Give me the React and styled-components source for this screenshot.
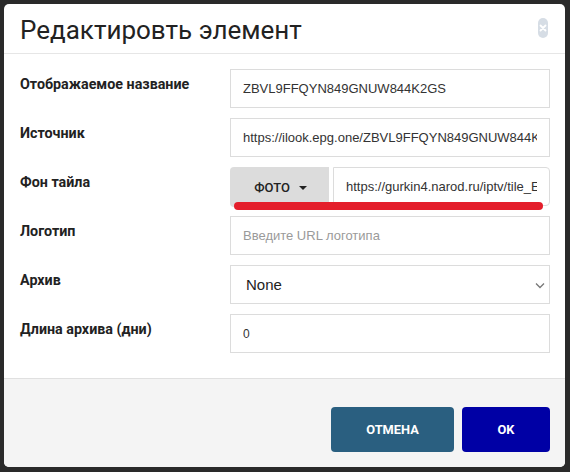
import styled, { createGlobalStyle } from 'styled-components';

const GlobalStyle = createGlobalStyle`
    html, body {
        margin: 0;
        padding: 0;
        background: #2a2a2a;
    }
    * {
        box-sizing: border-box;
    }
`;

const Dialog = styled.div`
    margin: 4px 5px 0 4px;
    width: 561px;
    height: 463px;
    background: #ffffff;
    border-radius: 5px;
    overflow: hidden;
    display: flex;
    flex-direction: column;
    font-family: Roboto, "Liberation Sans", sans-serif;
`;

const Header = styled.div`
    height: 50px;
    padding: 2px 16px 0 16px;
    display: flex;
    align-items: center;
    justify-content: space-between;
    border-bottom: 1px solid #e6e6e6;
`;

const Title = styled.h2`
    margin: 0;
    font-size: 26px;
    font-weight: 400;
    color: #222;
`;

const CloseButton = styled.button`
    border: none;
    background: transparent;
    padding: 0;
    margin-right: 1px;
    margin-top: -4px;
    display: flex;
    cursor: pointer;
`;

const Body = styled.div`
    flex: 1;
    padding: 15px 15px 24px 16px;
    display: flex;
    flex-direction: column;
    gap: 10px;
`;

const Row = styled.div`
    display: grid;
    grid-template-columns: 210px 320px;
    height: 39px;
`;

const Label = styled.label`
    padding-top: 5px;
    font-size: 14.3px;
    line-height: 20px;
    font-weight: 700;
    color: #222;
`;

const TextInput = styled.input`
    width: 100%;
    height: 39px;
    border: 1px solid #dcdcdc;
    border-radius: ${(p) => (p.$joined ? '0 4px 4px 0' : '0')};
    padding: 0 12px;
    font-family: "Liberation Sans", Arial, sans-serif;
    font-size: ${(p) => p.$size || 13}px;
    color: #333;
    background: #fff;
    outline: none;

    &::placeholder {
        color: #9a9a9a;
    }
`;

const SelectWrap = styled.div`
    position: relative;
    height: 39px;
`;

const Select = styled.select`
    width: 100%;
    height: 39px;
    border: 1px solid #dcdcdc;
    background: #fff;
    padding: 0 30px 0 15px;
    font-family: "Liberation Sans", Arial, sans-serif;
    font-size: 15px;
    color: #222;
    appearance: none;
    outline: none;
`;

const Chevron = styled.svg`
    position: absolute;
    right: 5px;
    top: 17px;
    pointer-events: none;
`;

const Group = styled.div`
    position: relative;
    display: flex;
    gap: 4px;
    height: 40px;
`;

const TypeButton = styled.button`
    flex: 0 0 99px;
    border: none;
    border-radius: 4px 0 0 4px;
    background: #dcdcdc;
    font-family: Roboto, "Liberation Sans", sans-serif;
    font-size: 13px;
    font-weight: 500;
    color: #222;
    display: flex;
    align-items: center;
    justify-content: center;
    gap: 9px;
    padding: 0 0 0 2px;
`;

const Caret = styled.span`
    width: 0;
    height: 0;
    border-left: 4px solid transparent;
    border-right: 4px solid transparent;
    border-top: 4px solid #222;
    margin-top: 1px;
`;

const Underline = styled.span`
    position: absolute;
    left: 4px;
    top: 35px;
    width: 309px;
    height: 8px;
    border-radius: 4px;
    background: #e41e2b;
    pointer-events: none;
`;

const Footer = styled.div`
    height: 89px;
    border-top: 1px solid #e0e0e0;
    background: #f4f4f4;
    padding: 28px 15px 15px 15px;
    display: flex;
    justify-content: flex-end;
    gap: 8px;
`;

const ActionButton = styled.button`
    width: ${(p) => p.$width}px;
    height: 45px;
    border: none;
    border-radius: 4px;
    background: ${(p) => p.$bg};
    color: #fff;
    font-family: Roboto, "Liberation Sans", sans-serif;
    font-size: 12.8px;
    font-weight: 700;
    text-transform: uppercase;
    cursor: pointer;
`;

export default function App() {
    return (
        <>
            <GlobalStyle />
            <Dialog>
                <Header>
                    <Title>Редактировть элемент</Title>
                    <CloseButton aria-label="close">
                        <svg width="10" height="20" viewBox="0 0 10 20">
                            <rect x="0" y="0" width="10" height="20" rx="5" fill="#d6dde5" />
                            <path d="M2.5 7.5 L7.5 12.5 M7.5 7.5 L2.5 12.5" stroke="#fff" strokeWidth="1.8" strokeLinecap="round" />
                        </svg>
                    </CloseButton>
                </Header>
                <Body>
                    <Row>
                        <Label>Отображаемое название</Label>
                        <TextInput readOnly value="ZBVL9FFQYN849GNUW844K2GS" />
                    </Row>
                    <Row>
                        <Label>Источник</Label>
                        <TextInput readOnly value="https://ilook.epg.one/ZBVL9FFQYN849GNUW844K2GS/video.m3u8" />
                    </Row>
                    <Row>
                        <Label>Фон тайла</Label>
                        <Group>
                            <TypeButton>
                                ФОТО <Caret />
                            </TypeButton>
                            <TextInput $joined readOnly value="https://gurkin4.narod.ru/iptv/tile_ExtraTV.jpg" />
                            <Underline />
                        </Group>
                    </Row>
                    <Row>
                        <Label>Логотип</Label>
                        <TextInput placeholder="Введите URL логотипа" />
                    </Row>
                    <Row>
                        <Label>Архив</Label>
                        <SelectWrap>
                            <Select defaultValue="none">
                                <option value="none">None</option>
                            </Select>
                            <Chevron width="10" height="7" viewBox="0 0 10 7">
                                <path d="M1 1.5 L5 5.5 L9 1.5" stroke="#777" strokeWidth="1.3" fill="none" />
                            </Chevron>
                        </SelectWrap>
                    </Row>
                    <Row>
                        <Label>Длина архива (дни)</Label>
                        <TextInput readOnly value="0" $size={12} />
                    </Row>
                </Body>
                <Footer>
                    <ActionButton $width={123} $bg="#2a5f80">Отмена</ActionButton>
                    <ActionButton $width={88} $bg="#0000a5">OK</ActionButton>
                </Footer>
            </Dialog>
        </>
    );
}
